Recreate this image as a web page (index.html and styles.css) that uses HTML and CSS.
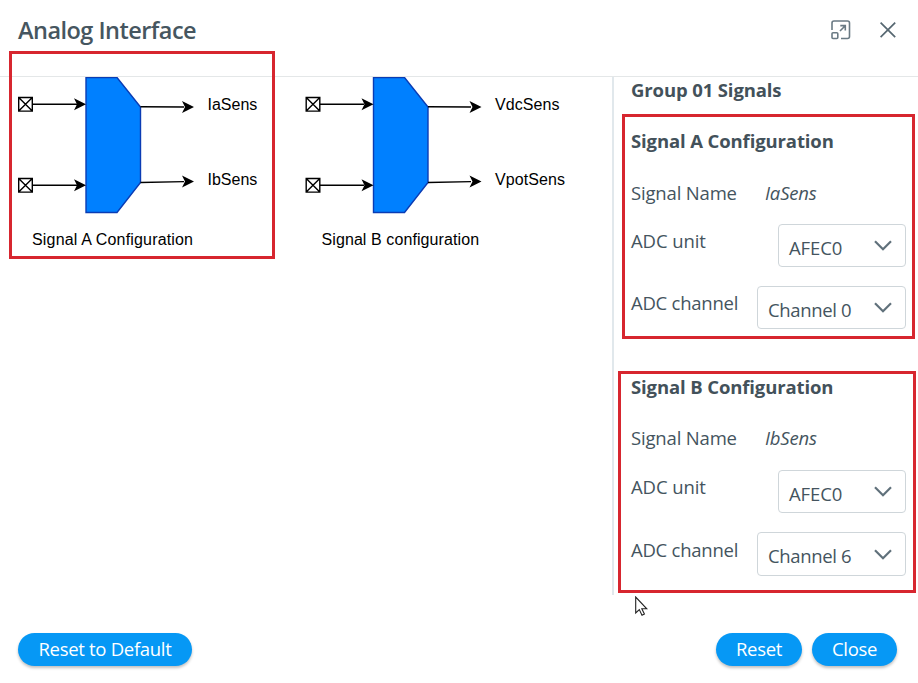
FILE: index.html
```html
<!DOCTYPE html>
<html lang="en">
<head>
<meta charset="utf-8">
<title>Analog Interface</title>
<link rel="stylesheet" href="styles.css">
</head>
<body>
<div class="dialog">
  <header class="header">
    <h1 class="title">Analog Interface</h1>
    <div class="actions">
      <svg class="icon-expand" width="20" height="20" viewBox="0 0 20 20" fill="none" stroke="#6a7a84" stroke-width="1.6">
        <path d="M1 10V3a2 2 0 0 1 2-2h13.5a2 2 0 0 1 2 2v13.5a2 2 0 0 1-2 2H10"/>
        <rect x="1" y="12.7" width="5.8" height="5.8" rx="1"/>
        <path d="M9 11l5.2-5.2M9.3 5.6h5v5"/>
      </svg>
      <svg class="icon-close" width="16" height="16" viewBox="0 0 16 16" fill="none" stroke="#566771" stroke-width="1.7">
        <path d="M.6.6l14.6 14.6M15.2.6L.6 15.2"/>
      </svg>
    </div>
  </header>
  <main class="body">
    <section class="diagrams">
      <svg class="diagram" width="287" height="190" viewBox="0 0 287 190">
        <path class="mux" d="M86 .5h31l23.500 29.500v75.500L117 135.500H86z"/>
        <g class="wire">
          <path d="M18.700 20.500h13.600v13.600H18.700zM18.700 20.500l13.600 13.600M32.300 20.500L18.700 34.100M33 27.300h44M18.700 101.500h13.600v13.600H18.700zM18.700 101.500l13.600 13.600M32.300 101.500l-13.600 13.600M33 108.300h44M140.500 29.700L184 30M140.500 105.500L184 104.600"/>
        </g>
        <path d="M86 27.300l-12-6 3 6-3 6zM86 108.300l-12-6 3 6-3 6zM194 30l-12-6 3 6-3 6zM194 104.500l-12-6 3 6-3 6z"/>
        <text x="207.500" y="33">IaSens</text>
        <text x="207.500" y="108">IbSens</text>
        <text class="caption-a" x="32" y="168">Signal A Configuration</text>
      </svg>
      <svg class="diagram" width="300" height="190" viewBox="0 0 300 190">
        <path class="mux" d="M86.500 .5h31l23.500 29.500v75.500L117.500 135.500H86.500z"/>
        <g class="wire">
          <path d="M19.200 20.500h13.600v13.600H19.200zM19.200 20.500l13.600 13.600M32.800 20.500L19.200 34.100M33 27.300h44M19.200 101.500h13.600v13.600H19.200zM19.200 101.500l13.600 13.600M32.800 101.500l-13.600 13.600M33 108.300h44M141 29.700L184 30M141 105.500L184 104.600"/>
        </g>
        <path d="M86.500 27.300l-12-6 3 6-3 6zM86.500 108.300l-12-6 3 6-3 6zM194.500 30l-12-6 3 6-3 6zM194.500 104.500l-12-6 3 6-3 6z"/>
        <text class="caption-b" x="208" y="33">VdcSens</text>
        <text class="caption-b" x="208" y="108">VpotSens</text>
        <text class="caption-b" x="34.500" y="168">Signal B configuration</text>
      </svg>
    </section>
    <aside class="panel">
      <h2 class="heading">Group 01 Signals</h2>
      <section class="group group-a">
        <h3 class="heading">Signal A Configuration</h3>
        <div class="row name"><span class="label">Signal Name</span><em class="value">IaSens</em></div>
        <div class="row unit"><span class="label">ADC unit</span><div class="select small"><span class="unit-text">AFEC0</span><svg width="18" height="11" viewBox="0 0 18 11"><path d="M1 1.200l8 8 8-8"/></svg></div></div>
        <div class="row channel"><span class="label">ADC channel</span><div class="select"><span>Channel 0</span><svg width="18" height="11" viewBox="0 0 18 11"><path d="M1 1.200l8 8 8-8"/></svg></div></div>
      </section>
      <section class="group group-b">
        <h3 class="heading">Signal B Configuration</h3>
        <div class="row name"><span class="label">Signal Name</span><em class="value">IbSens</em></div>
        <div class="row unit"><span class="label">ADC unit</span><div class="select small"><span class="unit-text">AFEC0</span><svg width="18" height="11" viewBox="0 0 18 11"><path d="M1 1.200l8 8 8-8"/></svg></div></div>
        <div class="row channel"><span class="label">ADC channel</span><div class="select"><span>Channel 6</span><svg width="18" height="11" viewBox="0 0 18 11"><path d="M1 1.200l8 8 8-8"/></svg></div></div>
      </section>
    </aside>
  </main>
  <footer class="footer">
    <button class="btn btn-default">Reset to Default</button>
    <button class="btn btn-reset">Reset</button>
    <button class="btn btn-close">Close</button>
  </footer>
  <div class="mark mark-diagram"></div>
  <div class="mark mark-a"></div>
  <div class="mark mark-b"></div>
  <svg class="cursor" width="13" height="20" viewBox="0 0 13 20"><path d="M.7 1v16l3.600-3.400 2.700 5.600 2.400-1.100-2.600-5.300h5z" fill="#fff" stroke="#222" stroke-width="1.100"/></svg>
</div>
</body>
</html>
```
FILE: styles.css
```css
* { box-sizing: border-box; }
body { margin: 0; background: #fff; }
.dialog {
  position: relative;
  width: 918px;
  height: 683px;
  overflow: hidden;
  display: flex;
  flex-direction: column;
  font-family: "Open Sans", "Noto Sans", sans-serif;
  font-size: 18.5px;
  color: #44545e;
}
h1, h2, h3 { margin: 0; }
.header {
  height: 77px;
  flex: none;
  display: flex;
  justify-content: space-between;
  align-items: flex-start;
  padding: 15px 22px 0 18px;
  border-bottom: 1px solid #e4e7e8;
}
.title { font-size: 23.500px; font-weight: 600; line-height: 31px; letter-spacing: -.53px; color: #465660; }
.actions { display: flex; gap: 29px; padding-top: 5px; }
.icon-close { margin-top: 2px; }
.body { height: 518px; flex: none; display: flex; }
.diagrams { width: 612px; display: flex; align-items: flex-start; }
.diagram { display: block; flex: none; font: 16px "Liberation Sans", Arial, sans-serif; fill: #000; }
.caption-a { letter-spacing: .17px; }
.caption-b { letter-spacing: .09px; }
.mux { fill: #0080ff; stroke: #0a3cb4; stroke-width: 1.400; }
.wire { fill: none; stroke: #000; stroke-width: 1.400; }
.panel { flex: 1; border-left: 2px solid #e1e8ec; padding: 0 12px 0 17px; }
.heading { font-size: 18.500px; font-weight: 700; line-height: 26px; letter-spacing: -.12px; color: #43515a; }
.group-a { margin-top: 25px; }
.group-b { margin-top: 45px; }
.row { display: flex; justify-content: space-between; letter-spacing: -.25px; white-space: nowrap; }
.name { justify-content: flex-start; line-height: 26px; margin-top: 26px; letter-spacing: -.17px; }
.group-b .name { margin-top: 25px; }
.name .label { width: 134px; }
.unit { margin-top: 18px; }
.group-b .unit { margin-top: 19px; }
.unit .label { line-height: 34px; letter-spacing: -.1px; }
.channel .label { line-height: 34px; }
.group-b .channel .label { line-height: 36px; }
.channel { margin-top: 19px; }
.select {
  width: 149px;
  height: 43px;
  display: flex;
  justify-content: space-between;
  padding: 0 13px 0 10px;
  border: 1px solid #cfd6da;
  border-radius: 4px;
  line-height: 45px;
  letter-spacing: -.35px;
}
.small { width: 128px; letter-spacing: -.1px; }
.group-b .channel .select { height: 44px; }
.select svg { margin-top: 15px; fill: none; stroke: #60717b; stroke-width: 2.200; }
.group-b .channel svg { margin-top: 16px; }
.footer { display: flex; gap: 10px; padding: 38px 21px 0 18px; }
.btn {
  height: 33px;
  padding: 0 0 2px;
  border: 0;
  border-radius: 17px;
  background: #0698f5;
  box-shadow: 0 2px 3px rgba(0, 0, 0, .25);
  font: 18.500px/31px "Open Sans", "Noto Sans", sans-serif;
  letter-spacing: -.3px;
  color: #fff;
}
.btn-default { width: 174px; margin-right: auto; }
.btn-reset { width: 86px; }
.btn-close { width: 85px; }
.mark { position: absolute; border: 3px solid #d7262f; }
.mark-diagram { left: 9px; top: 51px; width: 266px; height: 208px; }
.mark-a { left: 622px; top: 114px; width: 293px; height: 225px; }
.mark-b { left: 618px; top: 371px; width: 298px; height: 222px; }
.cursor { position: absolute; left: 635px; top: 596px; }
```
